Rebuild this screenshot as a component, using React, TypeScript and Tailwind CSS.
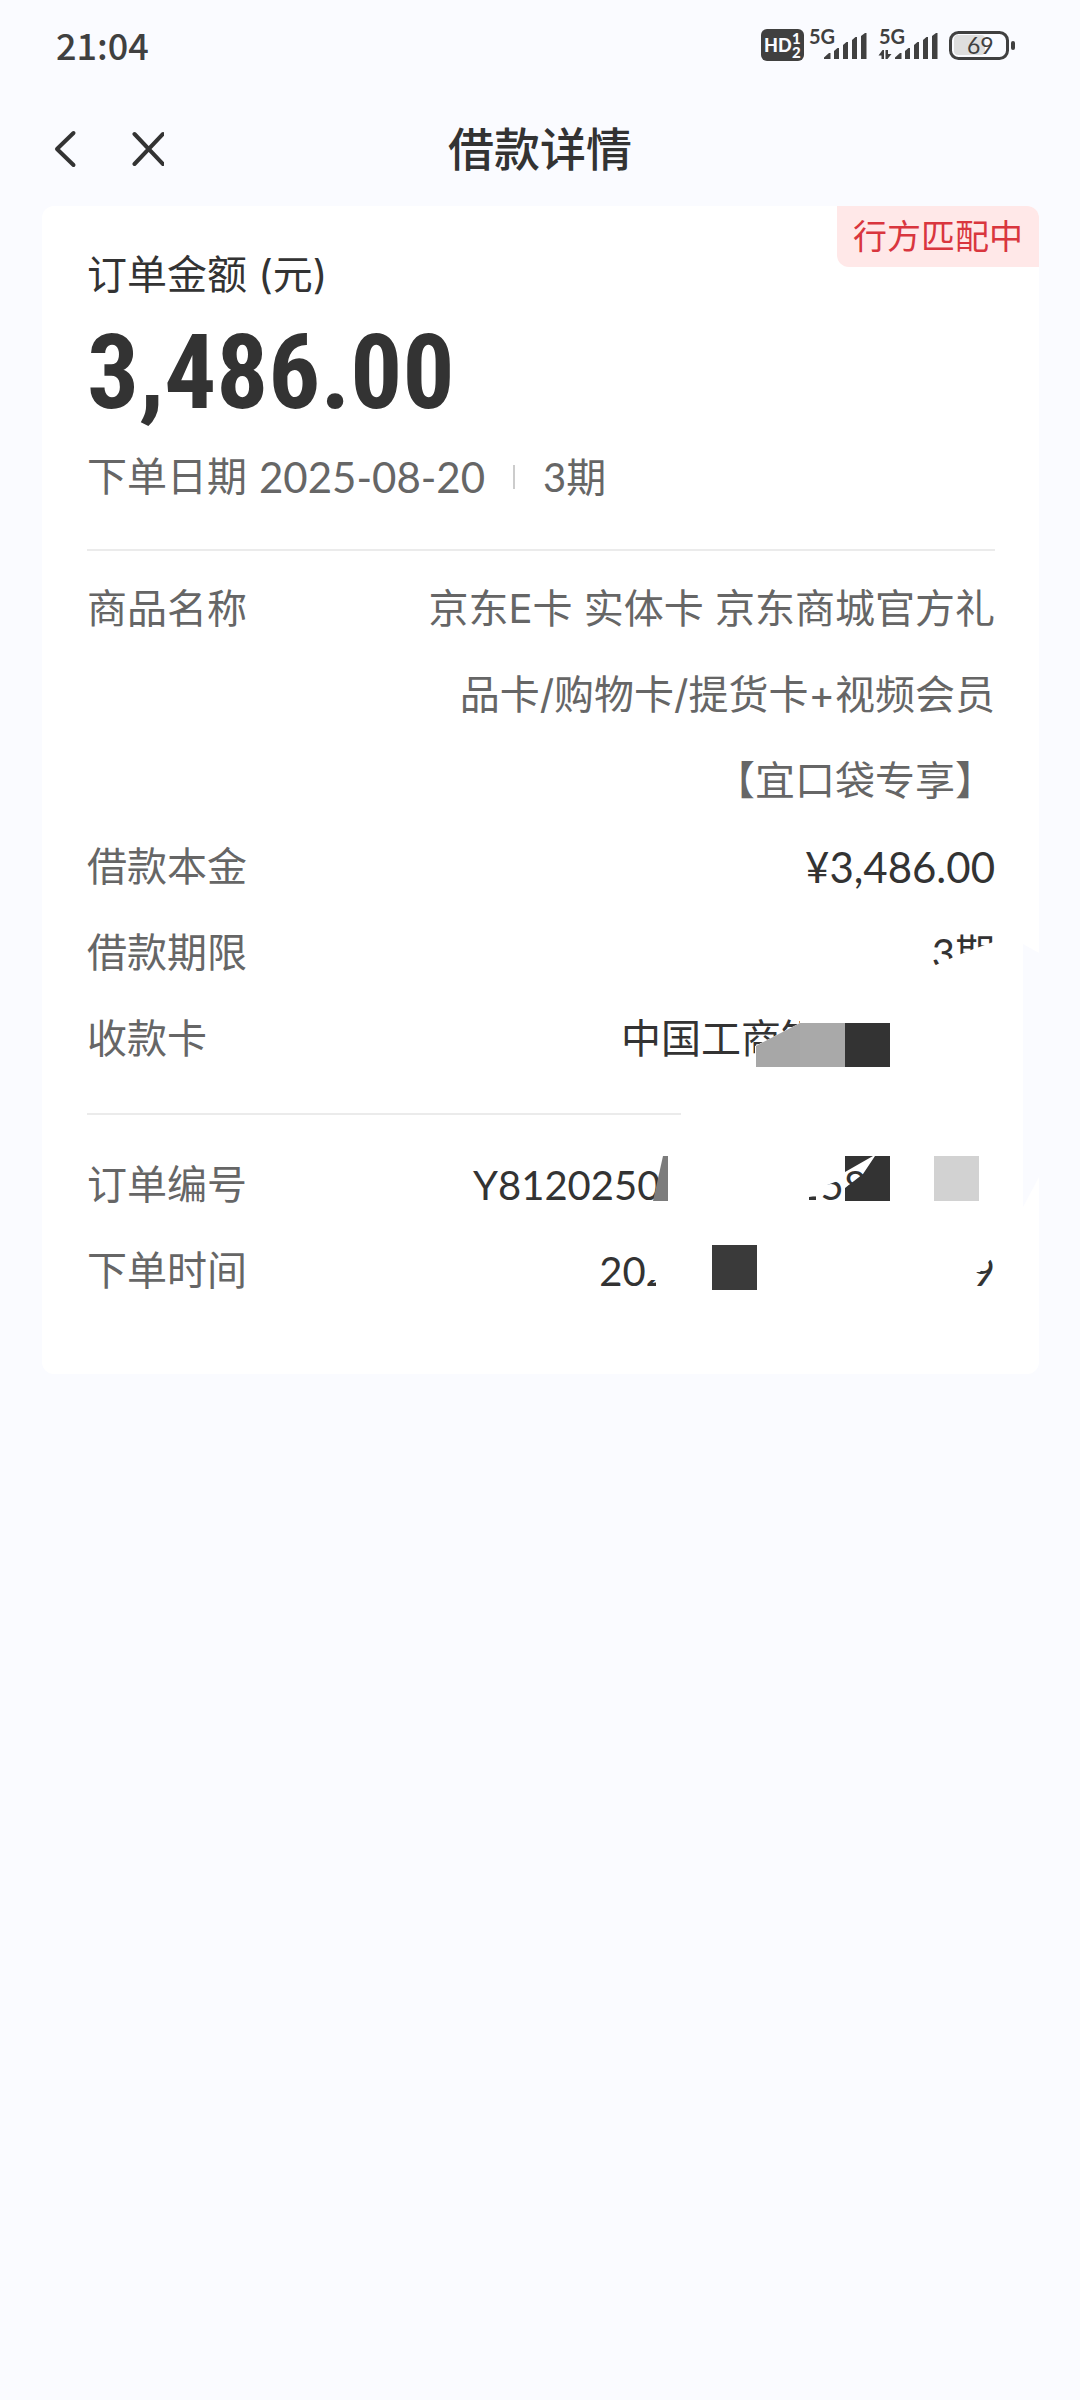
import { type ReactNode } from 'react';

const NUM = "font-['Lato','Noto_Sans_CJK_SC',sans-serif]";

function SignalBars({ x }: { x: number }) {
  return (
    <g transform={`translate(${x} 0)`} fill="#404040">
      <path d="M0 33v-1.500l5-4.500h1.500v6z" />
      <path d="M10 33v-8l3.500-3h1.500v11z" />
      <path d="M19 33V19l3.500-3H24v17z" />
      <path d="M28 33V14l3.500-3H33v22z" />
      <path d="M37 33V10l4-3h1.500v26z" />
    </g>
  );
}

function StatusIcons() {
  return (
    <svg
      className="h-[60px] w-[260px] font-['Lato',sans-serif]"
      viewBox="0 -10 260 60"
      role="img"
      aria-label="HD 5G 69%"
    >
      <rect x="3" y="3" width="43" height="32" rx="6" fill="#404040" />
      <g fill="#fafbff" fontWeight="900">
        <text x="6" y="26" fontSize="18">
          HD
        </text>
        <text x="34" y="18" fontSize="15">
          1
        </text>
        <text x="34" y="32" fontSize="15">
          2
        </text>
      </g>
      <g fill="#404040" fontWeight="700" fontSize="20">
        <text x="51" y="18">
          5G
        </text>
        <text x="121" y="18">
          5G
        </text>
      </g>
      <SignalBars x={66} />
      <path
        d="M120.500 29.500l4-5.500h1.500v9h-2.500v-3.500zM127.500 24h2.500v4h3.500l-4 5h-2z"
        fill="#404040"
      />
      <SignalBars x={137} />
      <rect x="196" y="9" width="31" height="20" rx="4" fill="#dedede" />
      <rect
        x="192.500"
        y="6.500"
        width="57"
        height="26"
        rx="8"
        fill="none"
        stroke="#404040"
        strokeWidth="3"
      />
      <rect x="253" y="15" width="4" height="9" rx="2" fill="#404040" />
      <text x="209" y="28" fontSize="23" fill="#404040">
        69
      </text>
    </svg>
  );
}

function Row({ label, children }: { label: string; children: ReactNode }) {
  return (
    <div className="flex items-start justify-between">
      <dt className="text-[#666666]">{label}</dt>
      <dd className="flex justify-end text-right text-[#333333]">{children}</dd>
    </div>
  );
}

// Redaction blocks laid over the private values, anchored to the card's right edge
function Redactions() {
  return (
    <svg
      className="pointer-events-none absolute top-0 right-0 h-[1168px] w-[597px]"
      viewBox="442 206 597 1168"
      aria-hidden="true"
    >
      <g fill="#ffffff">
        <path d="M930 968l10-5 14-6 14-6 28-10v44h-66z" />
        <path d="M755 1054v-8l45-23v-13h70v60H755z" />
        <path d="M681 1100h320v30H681z" />
        <path d="M662 1150h155v45l-8 2v10H655z" />
        <path d="M816 1150h29v30l-10 2-13 5v18h-6z" />
        <path d="M890 1150h103v60H890z" />
        <path d="M647 1240h327v60H656v-20h-9z" />
        <path d="M970 1240h30v18l-10 2-10 12h-10z" />
      </g>
      <path d="M1023 944l16 9v224l-16 30z" fill="#fafbff" />
      <path d="M756 1046l44-23v44h-44z" fill="#a7a7a7" />
      <path d="M800 1023h45v44h-45z" fill="#a9a9a9" />
      <path d="M845 1023h45v44h-45z" fill="#333333" />
      <path d="M663 1156h5v45h-15z" fill="#7c7c7c" />
      <path d="M845 1156h28l-28 16zM875 1156h15v45h-45v-13l18-14z" fill="#333333" />
      <path d="M934 1156h45v45h-45z" fill="#d2d2d2" />
      <path d="M712 1245h45v45h-45z" fill="#3a3a3a" />
    </svg>
  );
}

export default function App() {
  return (
    <div className="min-h-screen bg-[#fafbff] font-['Inter','Noto_Sans_CJK_SC',sans-serif] text-[#333333]">
      <div className="flex h-[92px] items-center justify-between pr-[62px] pl-14">
        <time className="pb-1 font-['Noto_Sans_CJK_SC',sans-serif] text-[36px] font-medium text-[#404040]">
          21:04
        </time>
        <StatusIcons />
      </div>

      <header className="grid h-[114px] grid-cols-[1fr_auto_1fr] items-center px-11">
        <div className="flex gap-8">
          <button type="button" aria-label="返回">
            <svg className="size-11" viewBox="0 0 44 44" fill="none" stroke="#333333" strokeWidth="4">
              <path d="M29.500 6L13 22l16.500 16" strokeLinecap="round" strokeLinejoin="round" />
            </svg>
          </button>
          <button type="button" aria-label="关闭">
            <svg className="size-11" viewBox="0 0 44 44" fill="none" stroke="#333333" strokeWidth="4">
              <path d="M14.500 7l28.500 30M43 7L14.500 37" strokeLinecap="round" />
            </svg>
          </button>
        </div>
        <h1 className="text-[46px] font-medium">借款详情</h1>
      </header>

      <main className="relative mr-[41px] ml-[42px] overflow-hidden rounded-xl bg-white pt-[39px] pr-11 pb-[60px] pl-[45px] text-[40px]">
        <span className="absolute top-0 right-0 rounded-bl-xl bg-[#ffe8e8] px-4 text-[34px] leading-[61px] text-[#d9363e]">
          行方匹配中
        </span>

        <h2 className="leading-[60px]">订单金额 (元)</h2>
        <p className="mt-[18px] font-['Roboto_Condensed','Open_Sans_Condensed','Noto_Sans_Condensed','Roboto',sans-serif] text-[103px] leading-[100px] font-bold">
          3,486.00
        </p>
        <p className="mt-6 flex items-center leading-[60px] text-[#666666]">
          <span className="mr-3">下单日期</span>
          <span className={`text-[42px] ${NUM}`}>2025-08-20</span>
          <span className="mx-7 h-6 w-0.5 bg-[#cccccc]" />
          <span className={NUM}>3期</span>
        </p>

        <dl className="mt-[42px] border-t-2 border-[#ebebeb] pt-[15px] leading-[86px]">
          <Row label="商品名称">
            <span className="w-[572px] text-[#666666]">
              京东E卡 实体卡 京东商城官方礼品卡/购物卡/提货卡+视频会员【宜口袋专享】
            </span>
          </Row>
          <Row label="借款本金">
            <span className={`text-[42px] ${NUM}`}>¥3,486.00</span>
          </Row>
          <Row label="借款期限">
            <span className={NUM}>3期</span>
          </Row>
          <Row label="收款卡">
            <span className="pr-[174px]">中国工商银</span>
          </Row>
        </dl>

        <dl className="mt-[31px] border-t-2 border-[#ebebeb] pt-[27px] leading-[86px]">
          <Row label="订单编号">
            <span className={`flex gap-[137px] pr-32 ${NUM}`}>
              <span>Y8120250</span>
              <span>258</span>
            </span>
          </Row>
          <Row label="下单时间">
            <span className={`flex gap-[303px] ${NUM}`}>
              <span>202</span>
              <span>9</span>
            </span>
          </Row>
        </dl>

        <Redactions />
      </main>
    </div>
  );
}
